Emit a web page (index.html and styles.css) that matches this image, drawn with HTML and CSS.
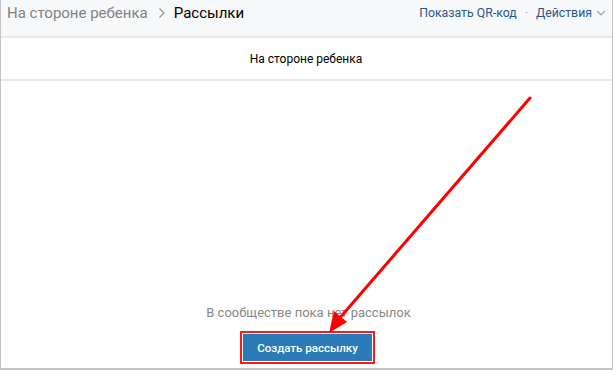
FILE: index.html
```html
<!DOCTYPE html>
<html lang="ru">
<head>
<meta charset="utf-8">
<link rel="stylesheet" href="styles.css">
</head>
<body>
<div class="frame">
  <header class="topbar">
    <div class="crumbs">
      <span class="crumb-parent">На стороне ребенка</span>
      <svg class="crumb-sep" width="8" height="12" viewBox="0 0 8 12"><path d="M1.5 1.5 L6 6 L1.5 10.5" fill="none" stroke="#939393" stroke-width="1.2"/></svg>
      <span class="crumb-current">Рассылки</span>
    </div>
    <div class="actions">
      <a class="link">Показать QR-код</a>
      <span class="dot">·</span>
      <a class="link">Действия</a>
      <svg class="caret" width="10" height="6" viewBox="0 0 10 6"><path d="M1 1 L5 4.8 L9 1" fill="none" stroke="#9aa9bb" stroke-width="1.2"/></svg>
    </div>
  </header>
  <div class="subbar">На стороне ребенка</div>
  <main class="content">
    <p class="empty">В сообществе пока нет рассылок</p>
    <div class="highlight">
      <button class="btn">Создать рассылку</button>
    </div>
  </main>
  <svg class="arrow" width="613" height="370" viewBox="0 0 613 370">
    <line x1="530" y1="98" x2="338" y2="320" stroke="#ff0000" stroke-width="3" stroke-linecap="round"/>
    <polygon points="329,333 334,311 347,322" fill="#ff0000"/>
  </svg>
</div>
</body>
</html>
```

FILE: styles.css
```css
html, body {
  margin: 0;
  padding: 0;
  background: #ffffff;
}
body {
  font-family: Roboto, "Liberation Sans", Arial, sans-serif;
}
.frame {
  position: relative;
  width: 611px;
  height: 368px;
  border-left: 1px solid #c4c4c4;
  border-right: 1px solid #c4c4c4;
  border-bottom: 2px solid #c4c4c4;
  display: flex;
  flex-direction: column;
  overflow: hidden;
}
.topbar {
  height: 36px;
  flex: none;
  background: #f7f8fa;
  border-bottom: 2px solid #e7e8ec;
  display: flex;
  align-items: center;
  justify-content: space-between;
  padding: 0 6px 0 6px;
}
.crumbs {
  display: flex;
  align-items: center;
  font-size: 15px;
  margin-top: -11px;
}
.crumb-parent {
  color: #828282;
}
.crumb-sep {
  margin: 0 8px 0 10px;
}
.crumb-current {
  color: #000000;
}
.actions {
  display: flex;
  align-items: center;
  font-size: 12.3px;
  margin-top: -11px;
}
.link {
  color: #2a5885;
}
.dot {
  color: #a0a8b2;
  margin: 0 8px 0 8px;
}
.caret {
  margin-left: 4px;
  margin-top: 1px;
}
.subbar {
  height: 41px;
  flex: none;
  border-bottom: 2px solid #e7e8ec;
  display: flex;
  align-items: center;
  justify-content: center;
  font-size: 12px;
  color: #000000;
  padding-right: 1px;
}
.content {
  flex: 1;
  display: flex;
  flex-direction: column;
  align-items: center;
  justify-content: flex-end;
  padding-bottom: 4px;
}
.empty {
  margin: 0 0 11px 4px;
  font-size: 13px;
  color: #878787;
}
.highlight {
  border: 2px solid #ff1a1a;
  padding: 1px;
  background: #ffffff;
  margin-left: 2px;
}
.btn {
  display: block;
  width: 129px;
  height: 27px;
  border: none;
  background: #2b7bb9;
  color: #ffffff;
  font-family: Roboto, "Liberation Sans", Arial, sans-serif;
  font-size: 11.5px;
  font-weight: 500;
  padding: 0;
}
.arrow {
  position: absolute;
  left: -1px;
  top: 0;
  pointer-events: none;
}
```
